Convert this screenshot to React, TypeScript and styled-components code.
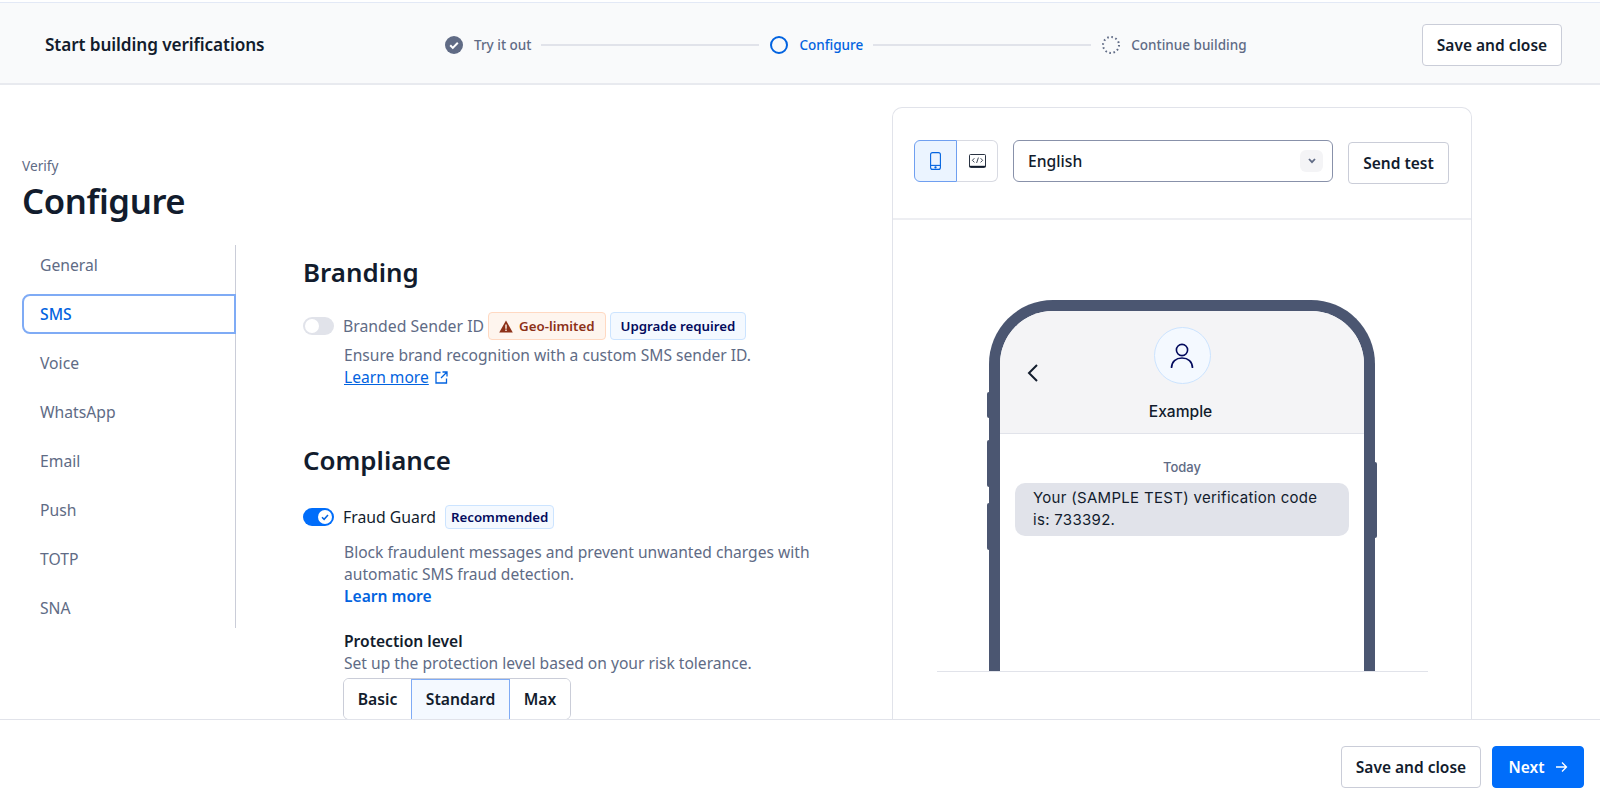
import React from 'react'
import styled, { createGlobalStyle } from 'styled-components'

const GlobalStyle = createGlobalStyle`
  html, body {
    margin: 0;
    padding: 0;
    background: #fff;
  }
  * {
    box-sizing: border-box;
  }
`

const uiFont = `'Noto Sans', 'Open Sans', sans-serif`
const previewFont = `Inter, 'Liberation Sans', sans-serif`

const Page = styled.div`
  display: flex;
  flex-direction: column;
  width: 1600px;
  height: 806px;
  overflow: hidden;
  padding-top: 2px;
  font-family: ${uiFont};
  color: #121c2d;
`

const Header = styled.header`
  display: flex;
  flex: none;
  align-items: center;
  height: 83px;
  padding: 3px 38px 0 45px;
  background: #f9fafb;
  border-top: 1px solid #e3e9f6;
  border-bottom: 2px solid #e8eaef;
`

const HeaderTitle = styled.div`
  width: 400px;
  font-size: 17.2px;
  font-weight: 600;
  letter-spacing: -0.1px;
`

const Stepper = styled.div`
  display: flex;
  align-items: center;
  width: 800px;
  margin-right: auto;
`

const StepIcon = styled.svg`
  flex: none;
  width: 18px;
  height: 18px;
  margin-right: 11px;
`

const StepLabel = styled.span<{ $current?: boolean }>`
  flex: none;
  font-size: 13.5px;
  font-weight: 500;
  color: ${p => (p.$current ? '#0263e0' : '#606b85')};
`

const StepLine = styled.span<{ $width: number }>`
  flex: none;
  width: ${p => p.$width}px;
  height: 2px;
  margin: 0 11px 0 10px;
  background: #e1e3ea;
`

const Button = styled.button<{ $primary?: boolean }>`
  display: inline-flex;
  flex: none;
  align-items: center;
  justify-content: center;
  gap: 10px;
  height: 42px;
  padding: 0;
  border: 1px solid ${p => (p.$primary ? '#006dfa' : '#cacdd8')};
  border-radius: 4px;
  background: ${p => (p.$primary ? '#006dfa' : '#fff')};
  color: ${p => (p.$primary ? '#fff' : '#121c2d')};
  font-family: ${uiFont};
  font-size: 15.5px;
  font-weight: 600;
`

const SaveButton = styled(Button)`
  width: 140px;
`

const NextButton = styled(Button)`
  width: 92px;
  margin-left: 11px;
`

const SendButton = styled(Button)`
  width: 101px;
  margin-top: 2px;
  margin-left: 15px;
`

const Main = styled.main`
  display: flex;
  flex: 1;
  min-height: 0;
  overflow: hidden;
`

const LeftColumn = styled.div`
  flex: none;
  width: 892px;
  padding: 71px 0 0 22px;
`

const Eyebrow = styled.div`
  font-size: 13.7px;
  line-height: 20px;
  color: #606b85;
`

const PageTitle = styled.h1`
  margin: 0 0 19px;
  font-size: 34.7px;
  font-weight: 600;
  line-height: 50px;
  letter-spacing: -0.4px;
  color: #121c2d;
`

const Body = styled.div`
  display: flex;
  align-items: flex-start;
`

const Nav = styled.nav`
  display: flex;
  flex: none;
  flex-direction: column;
  gap: 9px;
  width: 214px;
  border-right: 1px solid #cacdd8;
`

const NavItem = styled.a<{ $active?: boolean }>`
  display: flex;
  align-items: center;
  height: 40px;
  margin-right: ${p => (p.$active ? '-1px' : '0')};
  padding-left: ${p => (p.$active ? '16px' : '18px')};
  border: ${p => (p.$active ? '2px solid #7fabf5' : 'none')};
  border-radius: 8px 0 0 8px;
  font-size: 15.7px;
  font-weight: ${p => (p.$active ? 500 : 400)};
  color: ${p => (p.$active ? '#0263e0' : '#606b85')};
`

const Content = styled.div`
  flex: none;
  width: 560px;
  padding: 9px 0 0 68px;
`

const SectionTitle = styled.h2<{ $spaced?: boolean }>`
  margin: ${p => (p.$spaced ? '54px' : '0')} 0 0 -1px;
  font-size: 25.9px;
  font-weight: 600;
  line-height: 36px;
  color: #121c2d;
`

const ToggleRow = styled.div<{ $gap: number }>`
  display: flex;
  align-items: center;
  margin-top: ${p => p.$gap}px;
`

const Toggle = styled.span<{ $on?: boolean }>`
  display: flex;
  flex: none;
  align-items: center;
  justify-content: ${p => (p.$on ? 'flex-end' : 'flex-start')};
  width: 31px;
  height: 18px;
  margin-left: -1px;
  margin-right: 9px;
  padding: 2px;
  border-radius: 9px;
  background: ${p => (p.$on ? '#006dfa' : '#e1e3ea')};
`

const ToggleKnob = styled.span`
  display: flex;
  align-items: center;
  justify-content: center;
  width: 14px;
  height: 14px;
  border-radius: 50%;
  background: #fff;
`

const ToggleLabel = styled.span<{ $muted?: boolean }>`
  font-size: 15.8px;
  color: ${p => (p.$muted ? '#606b85' : '#121c2d')};
`

const Badge = styled.span<{ $tone: 'warning' | 'info'; $small?: boolean }>`
  display: inline-flex;
  flex: none;
  align-items: center;
  gap: 6px;
  height: ${p => (p.$small ? '24px' : '28px')};
  margin-left: ${p => (p.$small ? '9px' : '4px')};
  padding: 0 ${p => (p.$small ? '5px' : '10px')};
  border: 1px solid ${p => (p.$tone === 'warning' ? '#ffd9c2' : '#cce4ff')};
  border-radius: 4px;
  background: ${p => (p.$tone === 'warning' ? '#fef5ee' : '#f4f9ff')};
  color: ${p => (p.$tone === 'warning' ? '#8d3118' : '#030b5d')};
  font-size: 13.3px;
  font-weight: 600;
`

const Description = styled.p<{ $gap?: number }>`
  margin: ${p => p.$gap ?? 0}px 0 0 40px;
  width: 490px;
  font-size: 15.6px;
  line-height: 22px;
  color: #606b85;
`

const OutLink = styled.a`
  display: inline-flex;
  align-items: center;
  gap: 6px;
  color: #0263e0;
  span {
    text-decoration: underline;
  }
`

const PlainLink = styled.a`
  display: block;
  font-weight: 600;
  color: #0263e0;
`

const FieldLabel = styled.div`
  margin: 23px 0 0 40px;
  font-size: 15.6px;
  font-weight: 600;
  line-height: 22px;
`

const Segments = styled.div`
  display: flex;
  width: 228px;
  height: 42px;
  margin: 4px 0 0 39px;
  overflow: hidden;
  border: 1px solid #cacdd8;
  border-radius: 6px;
`

const Segment = styled.div<{ $width: number; $active?: boolean }>`
  display: flex;
  flex: none;
  align-items: center;
  justify-content: center;
  width: ${p => p.$width}px;
  border-left: 1px solid ${p => (p.$active ? '#7fabf5' : 'transparent')};
  border-right: 1px solid ${p => (p.$active ? '#7fabf5' : 'transparent')};
  box-shadow: ${p => (p.$active ? 'inset 0 1px 0 #7fabf5' : 'none')};
  background: ${p => (p.$active ? '#f4f9ff' : '#fff')};
  font-size: 15.7px;
  font-weight: 600;
`

const Card = styled.section`
  display: flex;
  flex: none;
  flex-direction: column;
  width: 580px;
  margin-top: 22px;
  border: 1px solid #e1e3ea;
  border-bottom: none;
  border-radius: 10px 10px 0 0;
`

const Toolbar = styled.div`
  display: flex;
  flex: none;
  align-items: flex-start;
  height: 112px;
  padding: 32px 0 0 21px;
  border-bottom: 2px solid #edeef2;
`

const ViewSwitch = styled.div`
  display: flex;
  flex: none;
  width: 84px;
  height: 42px;
  margin-right: 15px;
`

const ViewButton = styled.div<{ $active?: boolean }>`
  display: flex;
  align-items: center;
  justify-content: center;
  width: ${p => (p.$active ? '43px' : '41px')};
  border: 1px solid ${p => (p.$active ? '#6f9ff0' : '#d8dae2')};
  border-left-width: ${p => (p.$active ? '1px' : '0')};
  border-radius: ${p => (p.$active ? '6px 0 0 6px' : '0 6px 6px 0')};
  background: ${p => (p.$active ? '#ebf4ff' : '#fff')};
`

const Select = styled.div`
  display: flex;
  flex: none;
  align-items: center;
  justify-content: space-between;
  width: 320px;
  height: 42px;
  padding: 0 9px 0 14px;
  border: 1px solid #8891aa;
  border-radius: 6px;
  font-size: 15.7px;
  font-weight: 500;
`

const SelectChevron = styled.span`
  display: flex;
  align-items: center;
  justify-content: center;
  width: 23px;
  height: 22px;
  border-radius: 6px;
  background: #f4f4f6;
`

const Preview = styled.div`
  flex: 1;
  min-height: 0;
  padding: 80px 0 0 44px;
`

const Stage = styled.div`
  display: flex;
  width: 491px;
  height: 372px;
  padding-left: 52px;
  border-bottom: 1px solid #e1e3ea;
`

const PhoneBody = styled.div`
  position: relative;
  display: flex;
  flex-direction: column;
  width: 386px;
  height: 371px;
  border: solid #4b5671;
  border-width: 11px 11px 0;
  border-radius: 64px 64px 0 0;
  font-family: ${previewFont};
`

const SideKey = styled.span<{ $top: number; $height: number; $right?: boolean }>`
  position: absolute;
  top: ${p => p.$top}px;
  ${p => (p.$right ? 'right: -13px' : 'left: -13px')};
  width: 3px;
  height: ${p => p.$height}px;
  border-radius: ${p => (p.$right ? '0 2px 2px 0' : '2px 0 0 2px')};
  background: #4b5671;
`

const ScreenHeader = styled.div`
  position: relative;
  display: flex;
  flex: none;
  flex-direction: column;
  align-items: center;
  height: 123px;
  padding-top: 16px;
  border-bottom: 1px solid #e1e3ea;
  border-radius: 53px 53px 0 0;
  background: #f4f4f6;
`

const BackIcon = styled.svg`
  position: absolute;
  top: 51px;
  left: 25px;
  width: 16px;
  height: 22px;
`

const Avatar = styled.div`
  display: flex;
  align-items: center;
  justify-content: center;
  width: 57px;
  height: 57px;
  border: 1px solid #cce4ff;
  border-radius: 50%;
  background: #f4f9ff;
`

const ContactName = styled.div`
  margin-top: 18px;
  margin-right: 3px;
  font-size: 15.6px;
  font-weight: 500;
  line-height: 20px;
  color: #121c2d;
`

const DateLabel = styled.div`
  margin-top: 24px;
  font-size: 13px;
  font-weight: 500;
  line-height: 18px;
  text-align: center;
  color: #606b85;
`

const Bubble = styled.div`
  margin: 7px 15px 0;
  padding: 4px 18px 5px;
  border-radius: 10px;
  background: #e1e3ea;
  font-size: 15px;
  line-height: 22px;
  letter-spacing: 0.3px;
  color: #121c2d;
`

const Footer = styled.footer`
  display: flex;
  flex: none;
  justify-content: flex-end;
  height: 87px;
  padding: 26px 16px 0 0;
  border-top: 1px solid #e1e3ea;
`

const navItems = ['General', 'SMS', 'Voice', 'WhatsApp', 'Email', 'Push', 'TOTP', 'SNA']

const App = () => (
  <>
    <GlobalStyle />
    <Page>
      <Header>
        <HeaderTitle>Start building verifications</HeaderTitle>
        <Stepper>
          <StepIcon viewBox="0 0 18 18">
            <circle cx="9" cy="9" r="9" fill="#606b85" />
            <path d="M5.2 9.3l2.6 2.6 5-5.2" fill="none" stroke="#fff" strokeWidth="2" />
          </StepIcon>
          <StepLabel>Try it out</StepLabel>
          <StepLine $width={218} />
          <StepIcon viewBox="0 0 18 18">
            <circle cx="9" cy="9" r="8" fill="none" stroke="#0263e0" strokeWidth="2" />
          </StepIcon>
          <StepLabel $current>Configure</StepLabel>
          <StepLine $width={218} />
          <StepIcon viewBox="0 0 18 18">
            <circle cx="9" cy="9" r="8" fill="none" stroke="#606b85" strokeWidth="2" strokeDasharray="1.6 2.6" />
          </StepIcon>
          <StepLabel>Continue building</StepLabel>
        </Stepper>
        <SaveButton>Save and close</SaveButton>
      </Header>

      <Main>
        <LeftColumn>
          <Eyebrow>Verify</Eyebrow>
          <PageTitle>Configure</PageTitle>
          <Body>
            <Nav>
              {navItems.map(item => (
                <NavItem key={item} $active={item === 'SMS'}>
                  {item}
                </NavItem>
              ))}
            </Nav>
            <Content>
              <SectionTitle>Branding</SectionTitle>
              <ToggleRow $gap={22}>
                <Toggle>
                  <ToggleKnob />
                </Toggle>
                <ToggleLabel $muted>Branded Sender ID</ToggleLabel>
                <Badge $tone="warning">
                  <svg width="14" height="13" viewBox="0 0 14 13">
                    <path d="M7 0.5L13.8 12.5H0.2Z" fill="#8d3118" />
                    <path d="M6.3 4.5h1.4v4.2H6.3zM6.3 9.6h1.4v1.4H6.3z" fill="#fef5ee" />
                  </svg>
                  Geo-limited
                </Badge>
                <Badge $tone="info">Upgrade required</Badge>
              </ToggleRow>
              <Description $gap={4}>
                Ensure brand recognition with a custom SMS sender ID.
                <br />
                <OutLink>
                  <span>Learn more</span>
                  <svg width="13" height="13" viewBox="0 0 13 13" fill="none" stroke="#0263e0" strokeWidth="1.3">
                    <path d="M5.5 1.5H1v10.5h10.5V7.5M7.5 1h4.5v4.5M12 1L6 7" />
                  </svg>
                </OutLink>
              </Description>

              <SectionTitle $spaced>Compliance</SectionTitle>
              <ToggleRow $gap={27}>
                <Toggle $on>
                  <ToggleKnob>
                    <svg width="10" height="10" viewBox="0 0 10 10" fill="none" stroke="#0263e0" strokeWidth="1.5">
                      <path d="M2 5.2l2.1 2.1L8 3" />
                    </svg>
                  </ToggleKnob>
                </Toggle>
                <ToggleLabel>Fraud Guard</ToggleLabel>
                <Badge $tone="info" $small>
                  Recommended
                </Badge>
              </ToggleRow>
              <Description $gap={12}>
                Block fraudulent messages and prevent unwanted charges with
                <br />
                automatic SMS fraud detection.
                <PlainLink>Learn more</PlainLink>
              </Description>
              <FieldLabel>Protection level</FieldLabel>
              <Description>Set up the protection level based on your risk tolerance.</Description>
              <Segments>
                <Segment $width={67}>Basic</Segment>
                <Segment $width={99} $active>
                  Standard
                </Segment>
                <Segment $width={60}>Max</Segment>
              </Segments>
            </Content>
          </Body>
        </LeftColumn>

        <Card>
          <Toolbar>
            <ViewSwitch>
              <ViewButton $active>
                <svg width="11" height="18" viewBox="0 0 11 18" fill="none" stroke="#0263e0" strokeWidth="1.1">
                  <rect x="0.6" y="0.6" width="9.8" height="16.8" rx="2" />
                  <path d="M0.6 13.4h9.8" />
                  <circle cx="5.5" cy="15.4" r="0.6" fill="#0263e0" />
                </svg>
              </ViewButton>
              <ViewButton>
                <svg width="17" height="14" viewBox="0 0 17 14" fill="none" stroke="#121c2d" strokeWidth="0.9">
                  <rect x="0.5" y="0.5" width="16" height="13" rx="1" />
                  <path d="M0.5 12.4h16" strokeWidth="1.2" />
                  <path d="M5.4 4.2L3.4 6.3l2 2.1M11.6 4.2l2 2.1-2 2.1M9.4 3.6L7.6 9" strokeWidth="0.8" />
                </svg>
              </ViewButton>
            </ViewSwitch>
            <Select>
              English
              <SelectChevron>
                <svg width="10" height="8" viewBox="0 0 10 8" fill="none" stroke="#606b85" strokeWidth="1.8">
                  <path d="M2 2l3 3.2L8 2" />
                </svg>
              </SelectChevron>
            </Select>
            <SendButton>Send test</SendButton>
          </Toolbar>
          <Preview>
            <Stage>
              <PhoneBody>
                <SideKey $top={81} $height={26} />
                <SideKey $top={129} $height={47} />
                <SideKey $top={192} $height={47} />
                <SideKey $right $top={151} $height={76} />
                <ScreenHeader>
                  <BackIcon viewBox="0 0 16 22" fill="none" stroke="#121c2d" strokeWidth="2">
                    <path d="M12 3L4 11l8 8" />
                  </BackIcon>
                  <Avatar>
                    <svg width="24" height="28" viewBox="0 0 24 28" fill="none" stroke="#030b5d" strokeWidth="1.6">
                      <circle cx="12" cy="8" r="5.6" />
                      <path d="M1.5 26c0-6.5 4.5-10 10.5-10s10.5 3.5 10.5 10" />
                    </svg>
                  </Avatar>
                  <ContactName>Example</ContactName>
                </ScreenHeader>
                <DateLabel>Today</DateLabel>
                <Bubble>Your (SAMPLE TEST) verification code is: 733392.</Bubble>
              </PhoneBody>
            </Stage>
          </Preview>
        </Card>
      </Main>

      <Footer>
        <SaveButton>Save and close</SaveButton>
        <NextButton $primary>
          Next
          <svg width="13" height="12" viewBox="0 0 13 12" fill="none" stroke="#fff" strokeWidth="1.3">
            <path d="M1 6h10.5M7 1.5L11.5 6 7 10.5" />
          </svg>
        </NextButton>
      </Footer>
    </Page>
  </>
)

export default App
